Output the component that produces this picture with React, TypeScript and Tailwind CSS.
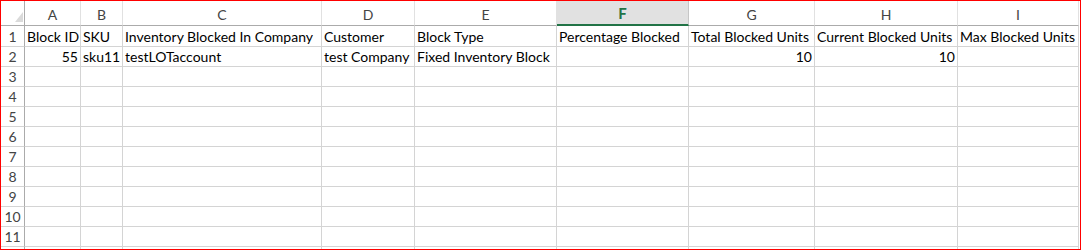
import React from 'react'

const COLS = [
  { key: 'A', w: 'w-[56px]' },
  { key: 'B', w: 'w-[42px]' },
  { key: 'C', w: 'w-[199px]' },
  { key: 'D', w: 'w-[93px]' },
  { key: 'E', w: 'w-[142px]' },
  { key: 'F', w: 'w-[132px]' },
  { key: 'G', w: 'w-[126px]' },
  { key: 'H', w: 'w-[143px]' },
  { key: 'I', w: 'w-[121px]' },
]

type Cell = { text: string; right?: boolean }

const ROWS: Cell[][] = [
  [
    { text: 'Block ID' },
    { text: 'SKU' },
    { text: 'Inventory Blocked In Company' },
    { text: 'Customer' },
    { text: 'Block Type' },
    { text: 'Percentage Blocked' },
    { text: 'Total Blocked Units' },
    { text: 'Current Blocked Units' },
    { text: 'Max Blocked Units' },
  ],
  [
    { text: '55', right: true },
    { text: 'sku11' },
    { text: 'testLOTaccount' },
    { text: 'test Company' },
    { text: 'Fixed Inventory Block' },
    { text: '' },
    { text: '10', right: true },
    { text: '10', right: true },
    { text: '' },
  ],
]

// 11 numbered rows, plus the top sliver of row 12 at the bottom edge
const ROW_COUNT = 12

export default function App() {
  return (
    <div className="w-[1081px] h-[250px] border border-[#ff0000] bg-white overflow-hidden font-['Lato',sans-serif]">
      {/* Column headers */}
      <div className="flex h-[25px]">
        <div className="relative w-[24px] h-full shrink-0 border-r border-b border-[#ababab]">
          <svg className="absolute left-[14px] top-[11px]" width="9" height="10" viewBox="0 0 9 10">
            <polygon points="8,0 8,10 0,10" fill="#dadada" />
          </svg>
        </div>
        {COLS.map((c) =>
          c.key === 'F' ? (
            <div
              key={c.key}
              className={`${c.w} h-full shrink-0 flex items-center justify-center bg-[#e1e1e1] border-r border-[#c6c6c6] border-b-2 border-b-[#217346] text-[15px] font-bold text-[#217346] pt-[1px]`}
            >
              {c.key}
            </div>
          ) : (
            <div
              key={c.key}
              className={`${c.w} h-full shrink-0 flex items-center justify-center border-r border-[#e1e1e1] border-b border-b-[#ababab] text-[14px] text-[#444444] pt-[2px]`}
            >
              {c.key}
            </div>
          ),
        )}
      </div>

      {/* Rows */}
      {Array.from({ length: ROW_COUNT }, (_, i) => {
        const data = ROWS[i]
        const h = i === 0 ? 'h-[21px]' : 'h-[20px]'
        return (
          <div key={i} className={`flex ${h}`}>
            <div className="w-[24px] h-full shrink-0 flex items-end justify-center border-r border-[#ababab] border-b border-b-[#d4d4d4] text-[14px] text-[#444444] leading-[19px]">
              {i < 11 ? i + 1 : ''}
            </div>
            {COLS.map((c, j) => {
              const cell = data?.[j]
              return (
                <div
                  key={c.key}
                  className={`${c.w} h-full shrink-0 flex items-end px-[2px] border-r border-b border-[#d4d4d4] text-[14px] text-black leading-[19px] whitespace-nowrap overflow-hidden ${
                    cell?.right ? 'justify-end' : 'justify-start'
                  }`}
                >
                  {cell?.text}
                </div>
              )
            })}
          </div>
        )
      })}
    </div>
  )
}
